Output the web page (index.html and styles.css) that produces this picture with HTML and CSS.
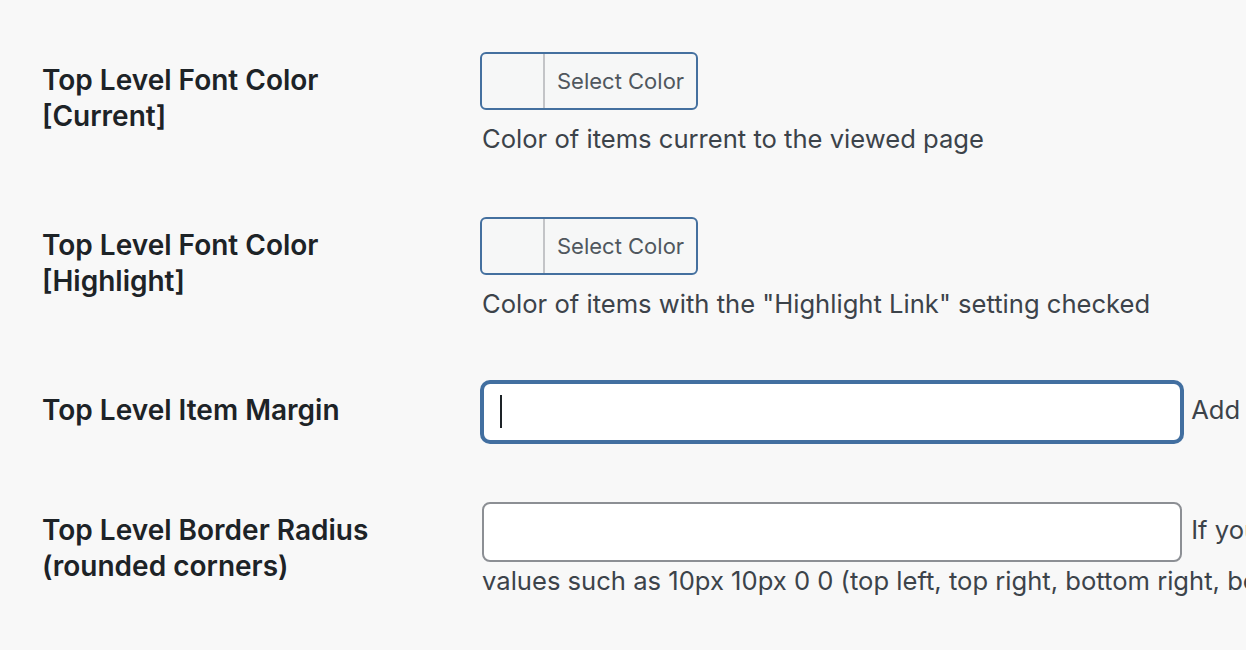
FILE: index.html
```html
<!DOCTYPE html>
<html lang="en">
<head>
  <meta charset="UTF-8">
  <title>Menu Settings</title>
  <link rel="stylesheet" href="styles.css">
</head>
<body>
  <div class="wrap">
    <table class="form-table">
      <tbody>
        <tr>
          <th>Top Level Font Color [Current]</th>
          <td>
            <button type="button" class="color-result">
              <span class="swatch"></span>
              <span class="color-text">Select Color</span>
            </button>
            <p class="description">Color of items current to the viewed page</p>
          </td>
        </tr>
        <tr>
          <th>Top Level Font Color [Highlight]</th>
          <td>
            <button type="button" class="color-result">
              <span class="swatch"></span>
              <span class="color-text">Select Color</span>
            </button>
            <p class="description">Color of items with the "Highlight Link" setting checked</p>
          </td>
        </tr>
        <tr>
          <th>Top Level Item Margin</th>
          <td>
            <span class="field focused">
              <input type="text" class="regular-text">
              <span class="caret"></span>
            </span>
            <span class="inline-desc">Add space between top level items, such as 0 5px</span>
          </td>
        </tr>
        <tr>
          <th>Top Level Border Radius (rounded corners)</th>
          <td>
            <span class="field"><input type="text" class="regular-text"></span>
            <span class="inline-desc">If you would like rounded corners, enter one value such as 6px or four<br>values such as 10px 10px 0 0 (top left, top right, bottom right, bottom left)</span>
          </td>
        </tr>
      </tbody>
    </table>
  </div>
</body>
</html>
```

FILE: styles.css
```css
body {
  margin: 0;
  padding: 0;
  background-color: #f8f8f8;
  color: #1d2327;
  font-family: Inter, "Noto Sans", sans-serif;
  overflow: hidden;
}

.wrap {
  padding: 22px 0 0 42px;
}

.form-table {
  width: 2200px;
  border-collapse: collapse;
}

.form-table th {
  width: 400px;
  padding: 40px 20px 40px 0;
  vertical-align: top;
  text-align: left;
  font-size: 28px;
  font-weight: 600;
  line-height: 36px;
  color: #1d2327;
}

.form-table td {
  padding: 30px 20px;
  vertical-align: top;
  font-size: 25.6px;
  line-height: 38px;
  color: #3c434a;
}

.color-result {
  display: flex;
  align-items: stretch;
  box-sizing: border-box;
  height: 58px;
  margin-left: -2px;
  padding: 0;
  border: 2px solid #44709f;
  border-radius: 6px;
  background-color: #f6f7f7;
  font-family: inherit;
  cursor: pointer;
}

.swatch {
  width: 61px;
  border-right: 2px solid #c3c4c7;
}

.color-text {
  display: flex;
  align-items: center;
  padding: 0 12px;
  font-size: 22px;
  color: #50575e;
}

.description {
  margin: 11px 0 0;
  line-height: 36px;
}

.field {
  position: relative;
  display: inline-block;
  vertical-align: middle;
}

.regular-text {
  display: block;
  box-sizing: border-box;
  width: 700px;
  height: 60px;
  margin: 0;
  padding: 0 16px;
  border: 2px solid #8c8f94;
  border-radius: 8px;
  background-color: #fff;
  font-family: inherit;
  font-size: 26px;
}

.focused .regular-text {
  border-color: #426fa0;
  box-shadow: 0 0 0 2px #426fa0;
  outline: none;
}

.caret {
  position: absolute;
  left: 18px;
  top: 13px;
  width: 2px;
  height: 33px;
  background-color: #1d2327;
}

.inline-desc {
  margin-left: 2px;
  white-space: nowrap;
}
```
